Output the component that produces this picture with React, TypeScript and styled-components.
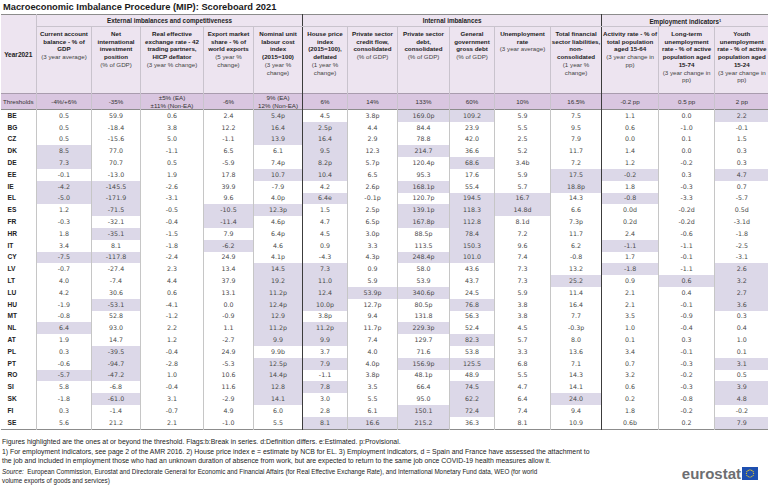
import React from "react";
import styled, { createGlobalStyle } from "styled-components";

const Global = createGlobalStyle`
  html, body { margin: 0; padding: 0; background: #fff; }
  body { font-family: "Liberation Sans", Arial, sans-serif; color: #222; }
`;

const Page = styled.div`
  width: 768px;
  height: 491px;
  overflow: hidden;
  display: flex;
  flex-direction: column;
`;

const Title = styled.h1`
  flex: none;
  margin: 0;
  padding: 2px 0 0 3px;
  height: 14px;
  box-sizing: border-box;
  font-size: 9.3px;
  line-height: 11px;
  font-weight: bold;
  color: #1a1a1a;
  white-space: nowrap;
`;

const Table = styled.table`
  flex: none;
  border-collapse: collapse;
  table-layout: fixed;
  width: 768px;
  border-top: 1px solid #8c8c8c;
  border-bottom: 1px solid #8c8c8c;
`;

type Sep = "dark" | "light" | "none";

const sepColor = (sep?: Sep) =>
  sep === "dark" ? "#3c3c3c" : sep === "none" ? "transparent" : "#c9c3cd";

const GroupRow = styled.tr`
  height: 12px;
`;

const GroupTh = styled.th<{ $sep?: Sep }>`
  padding: 0;
  background: #ede4f0;
  border-left: 1px solid ${(p) => sepColor(p.$sep)};
  border-bottom: 1px solid #c9c3cd;
  font-size: 6.3px;
  line-height: 7px;
  font-weight: bold;
  text-align: center;
  color: #222;
  white-space: nowrap;
  sup { font-size: 4px; vertical-align: 2px; }
`;

const YearTh = styled.th`
  padding: 0;
  background: #ede4f0;
  font-size: 6.5px;
  font-weight: bold;
  text-align: center;
  vertical-align: middle;
  color: #222;
`;

const HeadRow = styled.tr`
  height: 67px;
`;

const ColTh = styled.th<{ $sep?: Sep }>`
  padding: 3px 0 0;
  background: #ede4f0;
  border-left: 1px solid ${(p) => sepColor(p.$sep)};
  vertical-align: top;
  text-align: center;
  font-size: 6.2px;
  line-height: 7.7px;
  color: #222;
  font-weight: normal;
  white-space: pre;
`;

const HeadTitle = styled.div`
  font-weight: bold;
`;

const HeadUnit = styled.div`
  font-weight: normal;
  color: #444;
`;

const ThreshRow = styled.tr`
  height: 16px;
  border-top: 1px solid #a99cae;
  border-bottom: 1px solid #8c8c8c;
`;

const ThreshCell = styled.td<{ $sep?: Sep; $left?: boolean }>`
  padding: ${(p) => (p.$left ? "0 0 0 2px" : "0")};
  background: #d9c6e0;
  border-left: 1px solid ${(p) => sepColor(p.$sep)};
  text-align: ${(p) => (p.$left ? "left" : "center")};
  font-size: 6.2px;
  line-height: 7.2px;
  color: #333;
  white-space: nowrap;
`;

const DataRow = styled.tr`
  height: 11.8px;
`;

const CodeCell = styled.td`
  height: 11.8px;
  padding: 0 0 0 7px;
  font-size: 6.6px;
  font-weight: bold;
  color: #222;
  line-height: 8px;
`;

const NumCell = styled.td<{ $hl?: boolean; $sep?: Sep }>`
  height: 11.8px;
  padding: 0;
  text-align: center;
  font-family: "DejaVu Sans", Verdana, sans-serif;
  font-size: 6.3px;
  line-height: 8px;
  color: #4a4a4a;
  background: ${(p) => (p.$hl ? "#dcd8e8" : "#fff")};
  border-left: 1px solid ${(p) => (p.$sep === "dark" ? "#3c3c3c" : "#c6c6c6")};
  white-space: nowrap;
`;

const Notes = styled.div`
  flex: none;
  padding: 7px 0 0 2px;
  font-size: 6.9px;
  line-height: 9px;
  color: #222;
  white-space: nowrap;
`;

const NoteP = styled.p<{ $gap?: number }>`
  margin: ${(p) => p.$gap ?? 0}px 0 0;
`;

const SourceRow = styled.div`
  display: grid;
  grid-template-columns: 1fr auto;
  align-items: start;
  margin-top: 2px;
  padding-right: 10px;
  font-size: 6.3px;
  line-height: 9px;
`;

const Src = styled.em`
  font-style: italic;
`;

const Logo = styled.div`
  display: flex;
  align-items: center;
  gap: 1px;
  justify-self: end;
  margin-top: -1px;
`;

const LogoText = styled.span`
  font-family: "Liberation Sans", Arial, sans-serif;
  font-size: 15px;
  font-weight: bold;
  color: #6d6e71;
  line-height: 16px;
`;

const columns: { title: string; unit: string; sep?: Sep }[] = [
  { title: "Current account\nbalance - % of\nGDP", unit: "(3 year average)" },
  { title: "Net\ninternational\ninvestment\nposition", unit: "(% of GDP)" },
  { title: "Real effective\nexchange rate - 42\ntrading partners,\nHICP deflator", unit: "(3 year % change)" },
  { title: "Export market\nshare - % of\nworld exports", unit: "(5 year %\nchange)" },
  { title: "Nominal unit\nlabour cost\nindex\n(2015=100)", unit: "(3 year %\nchange)" },
  { title: "House price\nindex\n(2015=100),\ndeflated", unit: "(1 year %\nchange)", sep: "dark" },
  { title: "Private sector\ncredit flow,\nconsolidated", unit: "(% of GDP)" },
  { title: "Private sector\ndebt,\nconsolidated", unit: "(% of GDP)" },
  { title: "General\ngovernment\ngross debt", unit: "(% of GDP)" },
  { title: "Unemployment\nrate", unit: "(3 year average)" },
  { title: "Total financial\nsector liabilities,\nnon-\nconsolidated", unit: "(1 year %\nchange)" },
  { title: "Activity rate - % of\ntotal population\naged 15-64", unit: "(3 year change in\npp)", sep: "dark" },
  { title: "Long-term\nunemployment\nrate - % of active\npopulation aged\n15-74", unit: "(3 year change in\npp)" },
  { title: "Youth\nunemployment\nrate - % of active\npopulation aged\n15-24", unit: "(3 year change in\npp)" },
];

const widths = [36, 55, 49, 63, 50, 49, 45, 50, 52, 45, 56, 51, 57, 56, 54];

const thresholds: string[][] = [
  ["-4%/+6%"],
  ["-35%"],
  ["±5% (EA)", "±11% (Non-EA)"],
  ["-6%"],
  ["9% (EA)", "12% (Non-EA)"],
  ["6%"],
  ["14%"],
  ["133%"],
  ["60%"],
  ["10%"],
  ["16.5%"],
  ["-0.2 pp"],
  ["0.5 pp"],
  ["2 pp"],
];

// "*" marks a figure at or beyond the threshold
const rows: [string, string][] = [
  ["BE", "0.5|59.9|0.6|2.4|5.4p*|4.5|3.8p|169.0p*|109.2*|5.9|7.5|1.1|0.0|2.2*"],
  ["BG", "0.5|-18.4|3.8|12.2|16.4*|2.5p*|4.4|84.4|23.9|5.5|9.5|0.6|-1.0|-0.1"],
  ["CZ", "0.5|-15.6|5.0|-1.1|13.9*|16.4*|2.9|78.8|42.0|2.5|7.9|0.0|0.1|1.5"],
  ["DK", "8.5*|77.0|-1.1|6.5|6.1|9.5*|12.3|214.7*|36.6|5.2|11.7|1.4|0.0|0.3"],
  ["DE", "7.3*|70.7|0.5|-5.9|7.4p|8.2p*|5.7p|120.4p|68.6*|3.4b|7.2|1.2|-0.2|0.3"],
  ["EE", "-0.1|-13.0|1.9|17.8|10.7*|10.4*|6.5|95.3|17.6|5.9|17.5*|-0.2*|0.3|4.7*"],
  ["IE", "-4.2*|-145.5*|-2.6|39.9|-7.9|4.2|2.6p|168.1p*|55.4|5.7|18.8p*|1.8|-0.3|0.7"],
  ["EL", "-5.0*|-171.9*|-3.1|9.6|4.0p|6.4e*|-0.1p|120.7p|194.5*|16.7*|14.3|-0.8*|-3.3|-5.7"],
  ["ES", "1.2|-71.5*|-0.5|-10.5*|12.3p*|1.5|2.5p|139.1p*|118.3*|14.8d*|6.6|0.0d|-0.2d|0.5d"],
  ["FR", "-0.3|-32.1|-0.4|-11.4*|4.6p|4.7|6.5p|167.8p*|112.8*|8.1d|7.3p|0.2d|-0.2d|-3.1d"],
  ["HR", "1.8|-35.1*|-1.5|7.9|6.4p|4.5|3.0p|88.5p|78.4*|7.2|11.7|2.4|-0.6|-1.8"],
  ["IT", "3.4|8.1|-1.8|-6.2*|4.6|0.9|3.3|113.5|150.3*|9.6|6.2|-1.1*|-1.1|-2.5"],
  ["CY", "-7.5*|-117.8*|-2.4|24.9|4.1p|-4.3|4.3p|248.4p*|101.0*|7.4|-0.8|1.7|-0.1|-3.1"],
  ["LV", "-0.7|-27.4|2.3|13.4|14.5*|7.3*|0.9|58.0|43.6|7.3|13.2|-1.8*|-1.1|2.6*"],
  ["LT", "4.0|-7.4|4.4|37.9|19.2*|11.0*|5.9|53.9|43.7|7.3|25.2*|0.9|0.6*|3.2*"],
  ["LU", "4.2|30.6|0.6|13.1|11.2p*|12.4*|53.9p*|340.6p*|24.5|5.9|11.4|2.1|0.4|2.7*"],
  ["HU", "-1.9|-53.1*|-4.1|0.0|12.4p*|10.0p*|12.7p|80.5p|76.8*|3.8|16.4|2.1|-0.1|3.6*"],
  ["MT", "-0.8|52.8|-1.2|-0.9|12.9*|3.8p|9.4|131.8|56.3|3.8|7.7|3.5|-0.9|0.3"],
  ["NL", "6.4*|93.0|2.2|1.1|11.2p*|11.2p*|11.7p|229.3p*|52.4|4.5|-0.3p|1.0|-0.4|0.4"],
  ["AT", "1.9|14.7|1.2|-2.7|9.9*|9.9*|7.4|129.7|82.3*|5.7|8.0|0.1|0.3|1.0"],
  ["PL", "0.3|-39.5*|-0.4|24.9|9.9b|3.7|4.0|71.6|53.8|3.3|13.6|3.4|-0.1|0.1"],
  ["PT", "-0.6|-94.7*|-2.8|-5.3|12.5p*|7.9*|4.0p|156.9p*|125.5*|6.8|7.1|0.7|-0.3|3.1*"],
  ["RO", "-5.7*|-47.2*|1.0|10.6|14.4p*|-1.1|3.8p|48.1p|48.9|5.5|14.3|3.2|-0.2|0.5"],
  ["SI", "5.8|-6.8|-0.4|11.6|12.8*|7.8*|3.5|66.4|74.5*|4.7|14.1|0.6|-0.3|3.9*"],
  ["SK", "-1.8|-61.0*|3.1|-2.9|14.1*|3.0|5.5|95.0|62.2*|6.4|24.0*|0.2|-0.8|4.8*"],
  ["FI", "0.3|-1.4|-0.7|4.9|6.0|2.8|6.1|150.1*|72.4*|7.4|9.4|1.8|-0.2|-0.2"],
  ["SE", "5.6|21.2|2.1|-1.0|5.5|8.1*|16.6*|215.2*|36.3|8.1|10.9|0.6b|0.2|7.9*"],
];

const EuFlag = () => {
  const stars = Array.from({ length: 12 }, (_, i) => {
    const a = (i / 12) * Math.PI * 2;
    return { x: 8 + Math.cos(a) * 3.6, y: 6.5 + Math.sin(a) * 3.6 };
  });
  return (
    <svg width="16" height="13" viewBox="0 0 16 13">
      <rect width="16" height="13" fill="#1d4fb0" />
      {stars.map((s, i) => (
        <circle key={i} cx={s.x} cy={s.y} r="0.6" fill="#ffd617" />
      ))}
    </svg>
  );
};

export default function App() {
  return (
    <Page>
      <Global />
      <Title>Macroeconomic Imbalance Procedure (MIP): Scoreboard 2021</Title>
      <Table>
        <colgroup>
          {widths.map((w, i) => (
            <col key={i} style={{ width: w }} />
          ))}
        </colgroup>
        <thead>
          <GroupRow>
            <YearTh rowSpan={2}>Year2021</YearTh>
            <GroupTh colSpan={5}>External imbalances and competitiveness</GroupTh>
            <GroupTh colSpan={6} $sep="dark">Internal imbalances</GroupTh>
            <GroupTh colSpan={3} $sep="dark">
              Employment indicators<sup>1</sup>
            </GroupTh>
          </GroupRow>
          <HeadRow>
            {columns.map((c, i) => (
              <ColTh key={i} $sep={c.sep}>
                <HeadTitle>{c.title}</HeadTitle>
                <HeadUnit>{c.unit}</HeadUnit>
              </ColTh>
            ))}
          </HeadRow>
        </thead>
        <tbody>
          <ThreshRow>
            <ThreshCell $left $sep="none">Thresholds</ThreshCell>
            {thresholds.map((t, i) => (
              <ThreshCell key={i} $sep={columns[i].sep}>
                {t.map((line, j) => (
                  <div key={j}>{line}</div>
                ))}
              </ThreshCell>
            ))}
          </ThreshRow>
          {rows.map(([code, vals]) => (
            <DataRow key={code}>
              <CodeCell>{code}</CodeCell>
              {vals.split("|").map((v, i) => {
                const hl = v.endsWith("*");
                return (
                  <NumCell key={i} $hl={hl} $sep={columns[i].sep}>
                    {hl ? v.slice(0, -1) : v}
                  </NumCell>
                );
              })}
            </DataRow>
          ))}
        </tbody>
      </Table>
      <Notes>
        <NoteP>
          Figures highlighted are the ones at or beyond the threshold. Flags:b:Break in series. d:Definition differs. e:Estimated. p:Provisional.
        </NoteP>
        <NoteP $gap={1}>
          1) For employment indicators, see page 2 of the AMR 2016. 2) House price index e = estimate by NCB for EL. 3) Employment indicators, d = Spain and France have assessed the attachment to
        </NoteP>
        <NoteP>
          the job and included in employment those who had an unknown duration of absence from work, but are expected to return to the same job once COVID-19 health measures allow it.
        </NoteP>
        <SourceRow>
          <div>
            <NoteP>
              <Src>Source:</Src>&nbsp; European Commission, Eurostat and Directorate General for Economic and Financial Affairs (for Real Effective Exchange Rate), and International Monetary Fund data, WEO (for world
            </NoteP>
            <NoteP>volume exports of goods and services)</NoteP>
          </div>
          <Logo>
            <LogoText>eurostat</LogoText>
            <EuFlag />
          </Logo>
        </SourceRow>
      </Notes>
    </Page>
  );
}
